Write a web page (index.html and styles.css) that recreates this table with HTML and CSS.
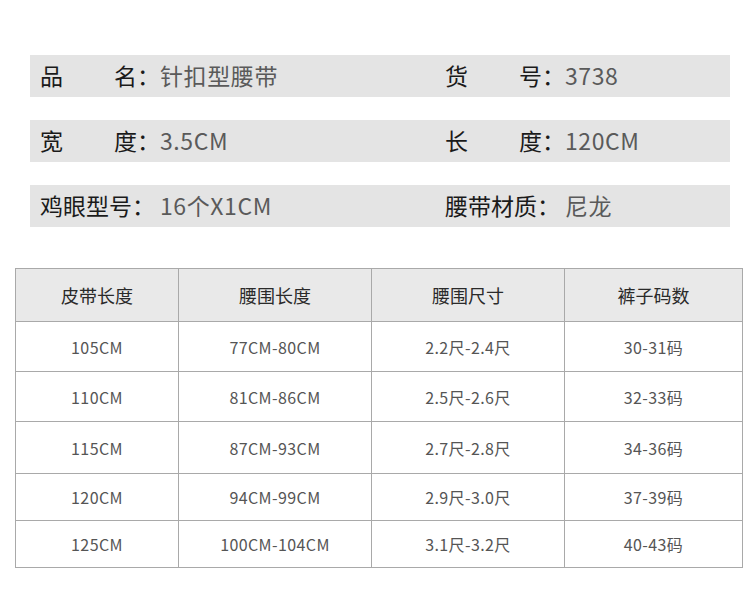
FILE: index.html
```html
<!DOCTYPE html>
<html lang="zh-CN">
<head>
<meta charset="utf-8">
<title>腰带参数</title>
<link rel="stylesheet" href="styles.css">
</head>
<body>
<div class="page">
  <div class="specs">
    <div class="bar">
      <div class="item">
        <span class="label"><span>品</span><span>名：</span></span>
        <span class="value">针扣型腰带</span>
      </div>
      <div class="item right">
        <span class="label"><span>货</span><span>号：</span></span>
        <span class="value">3738</span>
      </div>
    </div>
    <div class="bar">
      <div class="item">
        <span class="label"><span>宽</span><span>度：</span></span>
        <span class="value">3.5CM</span>
      </div>
      <div class="item right">
        <span class="label"><span>长</span><span>度：</span></span>
        <span class="value">120CM</span>
      </div>
    </div>
    <div class="bar">
      <div class="item">
        <span class="label"><span>鸡眼型号：</span></span>
        <span class="value">16个X1CM</span>
      </div>
      <div class="item right">
        <span class="label"><span>腰带材质：</span></span>
        <span class="value">尼龙</span>
      </div>
    </div>
  </div>

  <table class="size-table">
    <colgroup>
      <col class="c1"><col class="c2"><col class="c3"><col class="c4">
    </colgroup>
    <thead>
      <tr><th>皮带长度</th><th>腰围长度</th><th>腰围尺寸</th><th>裤子码数</th></tr>
    </thead>
    <tbody>
      <tr><td>105CM</td><td>77CM-80CM</td><td>2.2尺-2.4尺</td><td>30-31码</td></tr>
      <tr><td>110CM</td><td>81CM-86CM</td><td>2.5尺-2.6尺</td><td>32-33码</td></tr>
      <tr><td>115CM</td><td>87CM-93CM</td><td>2.7尺-2.8尺</td><td>34-36码</td></tr>
      <tr><td>120CM</td><td>94CM-99CM</td><td>2.9尺-3.0尺</td><td>37-39码</td></tr>
      <tr><td>125CM</td><td>100CM-104CM</td><td>3.1尺-3.2尺</td><td>40-43码</td></tr>
    </tbody>
  </table>
</div>
</body>
</html>
```

FILE: styles.css
```css
html, body {
  margin: 0;
  padding: 0;
  background: #ffffff;
}

body {
  font-family: "Noto Sans CJK SC", "Noto Sans", sans-serif;
  width: 750px;
  height: 592px;
  overflow: hidden;
}

.page {
  padding-top: 55px;
}

.specs {
  display: flex;
  flex-direction: column;
  gap: 23px;
  margin-left: 30px;
  width: 700px;
}

.bar {
  height: 42px;
  background: #e4e4e4;
  display: flex;
  align-items: center;
  padding-left: 10px;
  padding-bottom: 2px;
  box-sizing: border-box;
}

.item {
  display: flex;
  align-items: center;
  width: 405px;
  font-size: 23px;
  line-height: 40px;
}

.item.right {
  width: auto;
}

.label {
  display: flex;
  justify-content: space-between;
  width: 120px;
  color: #1a1a1a;
}

.value {
  color: #5a5a5a;
  letter-spacing: 0.6px;
}

.size-table {
  margin-top: 41px;
  margin-left: 15px;
  width: 727px;
  border-collapse: collapse;
  table-layout: fixed;
}

.c1 { width: 163px; }
.c2 { width: 193px; }
.c3 { width: 193px; }
.c4 { width: 178px; }

.size-table th,
.size-table td {
  border: 1px solid #a9a9a9;
  text-align: center;
  padding: 0;
}

.size-table th {
  height: 52px;
  background: #e9e9e9;
  color: #2a2a2a;
  font-size: 18px;
  font-weight: 400;
}

.size-table td {
  height: 49px;
  color: #555555;
  font-size: 16px;
  letter-spacing: 0.4px;
}

.size-table tbody tr:nth-child(3) td {
  height: 51px;
}

.size-table tbody tr:nth-child(4) td,
.size-table tbody tr:nth-child(5) td {
  height: 46px;
}
```
